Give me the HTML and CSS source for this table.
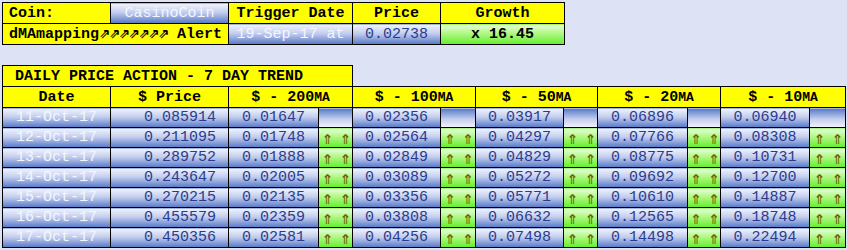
FILE: index.html
```html
<!DOCTYPE html>
<html>
<head>
<meta charset="utf-8">
<link rel="stylesheet" href="styles.css">
</head>
<body>
<table class="summary">
  <colgroup>
    <col class="w108"><col class="w118"><col class="w124"><col class="w88"><col class="w124">
  </colgroup>
  <tr>
    <td class="yel left">Coin:</td>
    <td class="blue light">CasinoCoin</td>
    <td class="yel">Trigger Date</td>
    <td class="yel">Price</td>
    <td class="yel">Growth</td>
  </tr>
  <tr>
    <td class="yel" colspan="2">dMAmapping<span class="ne">⇗⇗⇗⇗⇗⇗⇗</span> Alert</td>
    <td class="blue light">19-Sep-17 at</td>
    <td class="blue navy">0.02738</td>
    <td class="green bold">x 16.45</td>
  </tr>
</table>

<table class="trend">
  <colgroup>
    <col class="c108"><col class="c118">
    <col class="c90"><col class="c34">
    <col class="c88"><col class="c35">
    <col class="c88"><col class="c34">
    <col class="c90"><col class="c33">
    <col class="c89"><col class="c36">
  </colgroup>
  <tr class="head">
    <td class="yel title" colspan="4">DAILY PRICE ACTION - 7 DAY TREND</td>
    <td class="none" colspan="8"></td>
  </tr>
  <tr class="head">
    <td class="yel">Date</td>
    <td class="yel">$ Price</td>
    <td class="yel" colspan="2">$ - 200<span class="sc">MA</span></td>
    <td class="yel" colspan="2">$ - 100<span class="sc">MA</span></td>
    <td class="yel" colspan="2">$ - 50<span class="sc">MA</span></td>
    <td class="yel" colspan="2">$ - 20<span class="sc">MA</span></td>
    <td class="yel" colspan="2">$ - 10<span class="sc">MA</span></td>
  </tr>
  <tr>
    <td class="blue light">11-Oct-17</td>
    <td class="blue navy right">0.085914</td>
    <td class="blue navy">0.01647</td><td class="rblue"></td>
    <td class="blue navy">0.02356</td><td class="rblue"></td>
    <td class="blue navy">0.03917</td><td class="rblue"></td>
    <td class="blue navy">0.06896</td><td class="rblue"></td>
    <td class="blue navy">0.06940</td><td class="rblue"></td>
  </tr>
  <tr>
    <td class="blue light">12-Oct-17</td>
    <td class="blue navy right">0.211095</td>
    <td class="blue navy">0.01748</td><td class="green arr">⇑ ⇑</td>
    <td class="blue navy">0.02564</td><td class="green arr">⇑ ⇑</td>
    <td class="blue navy">0.04297</td><td class="green arr">⇑ ⇑</td>
    <td class="blue navy">0.07766</td><td class="green arr">⇑ ⇑</td>
    <td class="blue navy">0.08308</td><td class="green arr">⇑ ⇑</td>
  </tr>
  <tr>
    <td class="blue light">13-Oct-17</td>
    <td class="blue navy right">0.289752</td>
    <td class="blue navy">0.01888</td><td class="green arr">⇑ ⇑</td>
    <td class="blue navy">0.02849</td><td class="green arr">⇑ ⇑</td>
    <td class="blue navy">0.04829</td><td class="green arr">⇑ ⇑</td>
    <td class="blue navy">0.08775</td><td class="green arr">⇑ ⇑</td>
    <td class="blue navy">0.10731</td><td class="green arr">⇑ ⇑</td>
  </tr>
  <tr>
    <td class="blue light">14-Oct-17</td>
    <td class="blue navy right">0.243647</td>
    <td class="blue navy">0.02005</td><td class="green arr">⇑ ⇑</td>
    <td class="blue navy">0.03089</td><td class="green arr">⇑ ⇑</td>
    <td class="blue navy">0.05272</td><td class="green arr">⇑ ⇑</td>
    <td class="blue navy">0.09692</td><td class="green arr">⇑ ⇑</td>
    <td class="blue navy">0.12700</td><td class="green arr">⇑ ⇑</td>
  </tr>
  <tr>
    <td class="blue light">15-Oct-17</td>
    <td class="blue navy right">0.270215</td>
    <td class="blue navy">0.02135</td><td class="green arr">⇑ ⇑</td>
    <td class="blue navy">0.03356</td><td class="green arr">⇑ ⇑</td>
    <td class="blue navy">0.05771</td><td class="green arr">⇑ ⇑</td>
    <td class="blue navy">0.10610</td><td class="green arr">⇑ ⇑</td>
    <td class="blue navy">0.14887</td><td class="green arr">⇑ ⇑</td>
  </tr>
  <tr>
    <td class="blue light">16-Oct-17</td>
    <td class="blue navy right">0.455579</td>
    <td class="blue navy">0.02359</td><td class="green arr">⇑ ⇑</td>
    <td class="blue navy">0.03808</td><td class="green arr">⇑ ⇑</td>
    <td class="blue navy">0.06632</td><td class="green arr">⇑ ⇑</td>
    <td class="blue navy">0.12565</td><td class="green arr">⇑ ⇑</td>
    <td class="blue navy">0.18748</td><td class="green arr">⇑ ⇑</td>
  </tr>
  <tr>
    <td class="blue light">17-Oct-17</td>
    <td class="blue navy right">0.450356</td>
    <td class="blue navy">0.02581</td><td class="green arr">⇑ ⇑</td>
    <td class="blue navy">0.04256</td><td class="green arr">⇑ ⇑</td>
    <td class="blue navy">0.07498</td><td class="green arr">⇑ ⇑</td>
    <td class="blue navy">0.14498</td><td class="green arr">⇑ ⇑</td>
    <td class="blue navy">0.22494</td><td class="green arr">⇑ ⇑</td>
  </tr>
</table>
</body>
</html>
```

FILE: styles.css
```css
html, body {
  margin: 0;
  padding: 0;
  background: #dde2f4;
}
body {
  padding: 2px;
  font-family: "Liberation Mono", "DejaVu Sans Mono", monospace;
  font-size: 15px;
}
table {
  border-collapse: collapse;
  table-layout: fixed;
}
td {
  border: 1px solid #000;
  padding: 0;
  height: 19px;
  line-height: 19px;
  text-align: center;
  white-space: nowrap;
}
.summary { width: 562px; }
.summary td { height: 20px; line-height: 19px; }
.trend .head td { height: 20px; line-height: 19px; }
.trend { width: 843px; margin-top: 20px; }

.w108 { width: 108px; } .w118 { width: 118px; } .w124 { width: 124px; } .w88 { width: 88px; }
.c108 { width: 108px; } .c118 { width: 118px; } .c90 { width: 90px; } .c34 { width: 34px; }
.c88 { width: 88px; } .c35 { width: 35px; } .c33 { width: 33px; } .c89 { width: 89px; } .c36 { width: 36px; }

.yel {
  background: #ffff00;
  color: #000;
  font-weight: bold;
}
.left { text-align: left; padding-left: 6px; }
.title { text-align: left; padding-left: 12px; }
.none {
  border: none;
  border-bottom: 1px solid #000;
  background: transparent;
}
.blue {
  background: linear-gradient(to bottom, #f2f4fc 0%, #c3cdee 45%, #5678c6 100%);
}
.rblue {
  background: linear-gradient(to bottom, #5678c6 0%, #c3cdee 55%, #f2f4fc 100%);
}
.light { color: #f4f6ff; }
.navy { color: #2a3c8e; }
.right { text-align: right; padding-right: 12px; }
.green {
  background: linear-gradient(to bottom, #eaffdc 0%, #a8f77a 50%, #62ee2c 100%);
}
.bold { font-weight: bold; color: #000; }
.arr {
  color: #6a6400;
  font-family: "DejaVu Sans Mono", monospace;
  font-size: 18px;
  font-weight: bold;
  letter-spacing: -1.8px;
}
.ne {
  font-family: "DejaVu Sans Mono", monospace;
  font-weight: bold;
  font-size: 18px;
  line-height: 0;
  letter-spacing: -1px;
}
.sc { font-size: 13px; line-height: 0; }
```
